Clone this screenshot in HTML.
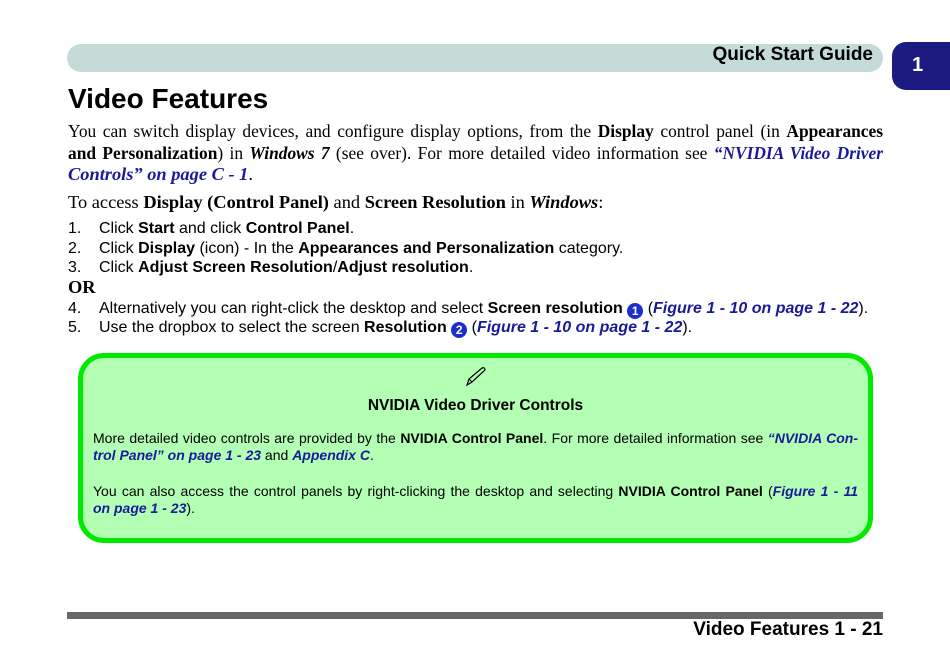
<!DOCTYPE html>
<html><head><meta charset="utf-8"><style>
*{margin:0;padding:0;box-sizing:border-box}
body{width:950px;height:669px;background:#fff;position:relative;overflow:hidden;font-family:"Liberation Sans",sans-serif;color:#000}
.a{position:absolute;white-space:nowrap}
.serif{font-family:"Liberation Serif",serif;font-size:18.4px}
.j{text-align:justify;text-align-last:justify;width:815px;left:68px;font-size:17.4px}
.lk{color:#1a1a9a;font-style:italic;font-weight:bold}
.li{font-size:16px;left:68px}
.li span.n{display:inline-block;width:31px}
.c{display:inline-block;width:16px;height:16px;border-radius:50%;background:#1b2fd0;color:#fff;font-size:12px;font-weight:bold;text-align:center;line-height:16px;vertical-align:-2px}
.g{font-size:14px}
</style></head><body>
<div class="a" style="left:67px;top:44px;width:816px;height:28px;background:#c4dbd7;border-radius:14px"></div>
<div class="a" style="right:77px;top:44px;font-size:19px;font-weight:bold">Quick Start Guide</div>
<div class="a" style="left:892px;top:42px;width:58px;height:48px;background:#1a1a80;border-radius:14px 0 0 14px;color:#fff;font-weight:bold;font-size:20px;padding:12px 0 0 20px">1</div>
<div class="a" style="left:68px;top:83px;font-size:28px;font-weight:bold">Video Features</div>

<div class="a serif j" style="top:121px">You can switch display devices, and configure display options, from the <b>Display</b> control panel (in <b>Appearances</b></div>
<div class="a serif j" style="top:143px"><b>and Personalization</b>) in <b><i>Windows 7</i></b> (see over). For more detailed video information see <span class="lk">“NVIDIA Video Driver</span></div>
<div class="a serif" style="left:68px;top:164px"><span class="lk">Controls” on page C - 1</span>.</div>
<div class="a serif" style="left:68px;top:192px">To access <b>Display (Control Panel)</b> and <b>Screen Resolution</b> in <b><i>Windows</i></b>:</div>

<div class="a li" style="top:220px"><span class="n">1.</span>Click <b>Start</b> and click <b>Control Panel</b>.</div>
<div class="a li" style="top:240px"><span class="n">2.</span>Click <b>Display</b> (icon) - In the <b>Appearances and Personalization</b> category.</div>
<div class="a li" style="top:259px"><span class="n">3.</span>Click <b>Adjust Screen Resolution</b>/<b>Adjust resolution</b>.</div>
<div class="a serif" style="left:68px;top:277px;font-weight:bold">OR</div>
<div class="a li" style="top:300px"><span class="n">4.</span>Alternatively you can right-click the desktop and select <b>Screen resolution</b> <span class="c">1</span> (<span class="lk">Figure 1 - 10 on page 1 - 22</span>).</div>
<div class="a li" style="top:319px"><span class="n">5.</span>Use the dropbox to select the screen <b>Resolution</b> <span class="c">2</span> (<span class="lk">Figure 1 - 10 on page 1 - 22</span>).</div>

<div class="a" style="left:78px;top:353px;width:795px;height:190px;background:#b3ffb3;border:5px solid #00ea00;border-radius:26px"></div>
<svg class="a" style="left:464px;top:366px" width="24" height="22" viewBox="0 0 24 22"><path d="M3 19 L5 13 L18 2 Q21 1 21 4 L8 16 Z M5 13 L8 16" fill="none" stroke="#000" stroke-width="1.2"/></svg>
<div class="a" style="left:78px;width:795px;top:397px;text-align:center;font-size:15.5px;font-weight:bold">NVIDIA Video Driver Controls</div>
<div class="a g" style="left:93px;top:430px;width:765px;text-align:justify;text-align-last:justify">More detailed video controls are provided by the <b>NVIDIA Control Panel</b>. For more detailed information see <span class="lk">“NVIDIA Con-</span></div>
<div class="a g" style="left:93px;top:447px"><span class="lk">trol Panel” on page 1 - 23</span> and <span class="lk">Appendix C</span>.</div>
<div class="a g" style="left:93px;top:483px;width:765px;text-align:justify;text-align-last:justify">You can also access the control panels by right-clicking the desktop and selecting <b>NVIDIA Control Panel</b> (<span class="lk">Figure 1 - 11</span></div>
<div class="a g" style="left:93px;top:500px"><span class="lk">on page 1 - 23</span>).</div>

<div class="a" style="left:67px;top:612px;width:816px;height:7px;background:#676767"></div>
<div class="a" style="right:67px;top:619px;font-size:19px;font-weight:bold">Video Features 1 - 21</div>
</body></html>
